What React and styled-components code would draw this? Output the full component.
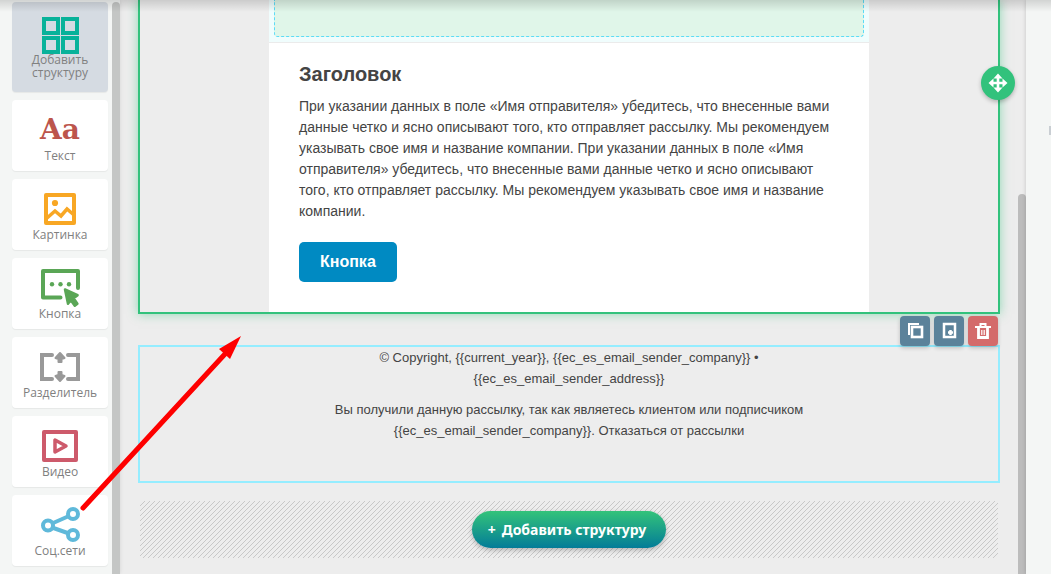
import styled, { createGlobalStyle } from 'styled-components';

const GlobalStyle = createGlobalStyle`
  * {
    box-sizing: border-box;
  }
  body {
    margin: 0;
    background: #ededed;
    font-family: 'Liberation Sans', Arial, sans-serif;
  }
  button {
    border: 0;
    padding: 0;
    cursor: pointer;
  }
  svg {
    display: block;
  }
`;

const StructureIcon = () => (
  <svg width="40" height="40" fill="none" stroke="#08b29a" strokeWidth="4">
    <rect x="4" y="5" width="14" height="14" />
    <rect x="23" y="5" width="14" height="14" />
    <rect x="4" y="24" width="14" height="14" />
    <rect x="23" y="24" width="14" height="14" />
  </svg>
);

const PictureIcon = () => (
  <svg width="40" height="40" fill="none" stroke="#f8a724" strokeWidth="4">
    <rect x="6" y="6" width="28" height="28" strokeLinejoin="round" />
    <path d="M7 29l8-7 6 5 6-7 7 6" strokeWidth="3.5" />
    <circle cx="15" cy="14" r="3.1" fill="#f8a724" stroke="none" />
  </svg>
);

const ButtonIcon = () => (
  <svg width="40" height="40" fill="none">
    <path
      d="M38 20V3H3v26.5h17.5"
      stroke="#5aa656"
      strokeWidth="4"
      strokeLinecap="round"
      strokeLinejoin="round"
    />
    <g fill="#5aa656">
      <circle cx="12" cy="16.3" r="2.2" />
      <circle cx="20.5" cy="16.3" r="2.2" />
      <circle cx="29" cy="16.3" r="2.2" />
      <path
        d="M25 21.5l12.6 5.700-4 3 3.800 5.500-2.600 2-4-5.500-2.800 3.500z"
        stroke="#5aa656"
        strokeWidth="2.5"
        strokeLinejoin="round"
      />
    </g>
  </svg>
);

const DividerIcon = () => (
  <svg width="40" height="40" fill="none">
    <path
      d="M12 8H2v24h10M28 8h10v24H28"
      stroke="#999"
      strokeWidth="4"
      strokeLinecap="round"
    />
    <path
      d="M20 6l4.500 5-3 1v3h-3v-3l-3-1zM20 34l4.500-5-3-1v-3h-3v3l-3 1z"
      fill="#999"
      stroke="#999"
      strokeWidth="2"
      strokeLinejoin="round"
    />
  </svg>
);

const VideoIcon = () => (
  <svg
    width="40"
    height="40"
    fill="none"
    stroke="#cd5a6b"
    strokeWidth="4"
    strokeLinejoin="round"
  >
    <rect x="4" y="6" width="32" height="28" />
    <path d="M15 14v12l11-6z" strokeWidth="3.5" />
  </svg>
);

const SocialIcon = () => (
  <svg width="40" height="40" fill="none" stroke="#5fb9da" strokeWidth="4">
    <path d="M12 18.5L29 11M12 22.5L29 28.500" />
    <circle cx="8" cy="20.5" r="5" />
    <circle cx="33" cy="9" r="5" />
    <circle cx="33" cy="30" r="5" />
  </svg>
);

const CopyIcon = () => (
  <svg width="30" height="30" fill="none" stroke="#fff">
    <path d="M9 19V8h10" strokeWidth="2" />
    <rect x="12" y="11" width="10" height="10" strokeWidth="2.6" />
  </svg>
);

const SaveIcon = () => (
  <svg width="30" height="30" fill="none" stroke="#fff">
    <rect x="10" y="8" width="11" height="13" strokeWidth="2.5" />
    <path d="M16.5 14v5M14 16.500h5" strokeWidth="2.5" />
  </svg>
);

const TrashIcon = () => (
  <svg width="30" height="30" fill="none" stroke="#fff">
    <path d="M7 11h16M12.500 10V8h5v2" strokeWidth="2" />
    <path d="M10.500 12v9.500h9V12" strokeWidth="2.8" />
    <path d="M13.800 14v5M16.200 14v5" strokeWidth="1.2" />
  </svg>
);

const MoveIcon = () => (
  <svg width="20" height="20" fill="none">
    <path d="M10 3v14M3 10h14" stroke="#fff" strokeWidth="2.6" />
    <path
      d="M10 .500l4.500 5h-9zM10 19.500l4.500-5h-9zM.500 10l5-4.500v9zM19.500 10l-5-4.500v9z"
      fill="#fff"
    />
  </svg>
);

const LetterIcon = () => <Letters aria-hidden="true">Aa</Letters>;

const blocks = [
  { title: 'Текст', Icon: LetterIcon },
  { title: 'Картинка', Icon: PictureIcon },
  { title: 'Кнопка', Icon: ButtonIcon },
  { title: 'Разделитель', Icon: DividerIcon },
  { title: 'Видео', Icon: VideoIcon },
  { title: 'Соц.сети', Icon: SocialIcon },
];

function Sidebar() {
  return (
    <SidebarWrapper>
      <BlockList>
        <BlockCard $active>
          <StructureIcon />
          <BlockTitle>Добавить структуру</BlockTitle>
        </BlockCard>
        {blocks.map(({ title, Icon }) => (
          <BlockCard key={title}>
            <Icon />
            <BlockTitle>{title}</BlockTitle>
          </BlockCard>
        ))}
      </BlockList>
      <SidebarThumb />
    </SidebarWrapper>
  );
}

function App() {
  return (
    <Page>
      <GlobalStyle />
      <Sidebar />
      <Canvas>
        <SelectedStructure>
          <MoveButton aria-label="Переместить">
            <MoveIcon />
          </MoveButton>
          <Letter>
            <DropArea>
              <DropTarget />
            </DropArea>
            <LetterBody>
              <Title>Заголовок</Title>
              <Text>
                При указании данных в поле «Имя отправителя» убедитесь, что
                внесенные вами данные четко и ясно описывают того, кто
                отправляет рассылку. Мы рекомендуем указывать свое имя и
                название компании. При указании данных в поле «Имя отправителя»
                убедитесь, что внесенные вами данные четко и ясно описывают
                того, кто отправляет рассылку. Мы рекомендуем указывать свое имя
                и название компании.
              </Text>
              <LetterButton>Кнопка</LetterButton>
            </LetterBody>
          </Letter>
        </SelectedStructure>

        <FooterStructure>
          <Tools>
            <ToolButton aria-label="Копировать">
              <CopyIcon />
            </ToolButton>
            <ToolButton aria-label="Сохранить">
              <SaveIcon />
            </ToolButton>
            <ToolButton $danger aria-label="Удалить">
              <TrashIcon />
            </ToolButton>
          </Tools>
          <FooterText>
            © Copyright, {'{{current_year}}'},{' '}
            {'{{ec_es_email_sender_company}}'} •{' '}
            {'{{ec_es_email_sender_address}}'}
          </FooterText>
          <FooterText>
            Вы получили данную рассылку, так как являетесь клиентом или
            подписчиком {'{{ec_es_email_sender_company}}'}.{' '}
            <FooterLink href="#unsubscribe">Отказаться от рассылки</FooterLink>
          </FooterText>
        </FooterStructure>

        <AddArea>
          <AddButton>
            <span>+</span>
            Добавить структуру
          </AddButton>
        </AddArea>
      </Canvas>
      <CanvasTrack>
        <CanvasThumb />
      </CanvasTrack>
      <RightPanel>
        <PanelHandle />
      </RightPanel>
      <HeaderShadow />
      <Pointer width="170" height="184">
        <path
          d="M7 176L149 22"
          stroke="#fe0000"
          strokeWidth="5"
          strokeLinecap="round"
        />
        <path d="M165 4L143 17l11 10z" fill="#fe0000" />
      </Pointer>
    </Page>
  );
}

export default App;

const Page = styled.div`
  position: relative;
  display: flex;
  height: 100vh;
  overflow: hidden;
  background: #ededed;
`;

const SidebarWrapper = styled.aside`
  display: flex;
  flex: none;
  gap: 4px;
  padding-left: 12px;
  background: #f4f6f5;
  box-shadow: 0 0 4px rgba(0, 0, 0, 0.1);
`;

const BlockList = styled.div`
  display: flex;
  flex-direction: column;
  gap: 8px;
  width: 96px;
  padding: 2px 0 8px;
`;

const BlockCard = styled.button`
  display: flex;
  flex: none;
  flex-direction: column;
  align-items: center;
  height: ${({ $active }) => ($active ? 90 : 71)}px;
  padding: ${({ $active }) => ($active ? '12px 12px 0' : '10px 0 0')};
  border-radius: 4px;
  background: ${({ $active }) => ($active ? '#d5dbe2' : '#fff')};
  box-shadow: 0 1px 1px rgba(0, 0, 0, 0.06);
`;

const BlockTitle = styled.span`
  margin-top: -1px;
  color: #808080;
  font-family: 'Open Sans', 'Noto Sans', sans-serif;
  font-size: 12px;
  line-height: 13px;
  text-align: center;
`;

const Letters = styled.span`
  height: 40px;
  color: #bc554c;
  font-family: 'DejaVu Serif', serif;
  font-size: 28px;
  font-weight: 700;
  line-height: 40px;
`;

const SidebarThumb = styled.div`
  width: 8px;
  margin-top: 2px;
  border-radius: 4px 4px 0 0;
  background: #c4c6c5;
`;

const Canvas = styled.main`
  flex: 1;
  min-width: 0;
  padding: 0 18px;
`;

const SelectedStructure = styled.section`
  position: relative;
  border: 2px solid #32c27c;
  border-top: 0;
  box-shadow: 0 0 10px rgba(50, 194, 124, 0.5);
`;

const MoveButton = styled.button`
  position: absolute;
  top: 66px;
  right: -17px;
  display: flex;
  align-items: center;
  justify-content: center;
  width: 34px;
  height: 34px;
  border-radius: 50%;
  background: #32c27c;
  box-shadow: 0 2px 4px rgba(0, 0, 0, 0.25);
`;

const Letter = styled.div`
  max-width: 600px;
  margin: 0 auto;
  background: #fff;
`;

const DropArea = styled.div`
  padding: 0 5px 5px;
  border-bottom: 1px solid #ebebeb;
  background: #f0fdfd;
`;

const DropTarget = styled.div`
  height: 37px;
  border: 1px dashed #5bdcf7;
  border-top: 0;
  border-radius: 0 0 4px 4px;
  background: #e0f6e9;
`;

const LetterBody = styled.div`
  padding: 19px 30px 30px;
`;

const Title = styled.h2`
  margin: 0 0 10px;
  color: #444;
  font-size: 20px;
  line-height: 24px;
`;

const Text = styled.p`
  margin: 0 0 20px;
  color: #444;
  font-size: 14px;
  line-height: 21px;
`;

const LetterButton = styled.button`
  display: block;
  height: 40px;
  padding: 0 21px;
  border-radius: 5px;
  background: #008ac2;
  color: #fff;
  font-family: 'Liberation Sans', Arial, sans-serif;
  font-size: 16px;
  font-weight: 700;
`;

const FooterStructure = styled.section`
  position: relative;
  margin-top: 31px;
  padding-bottom: 40px;
  border: 2px solid #95edff;
`;

const FooterText = styled.p`
  max-width: 500px;
  margin: 0 auto;
  color: #444;
  font-size: 13px;
  line-height: 21px;
  text-align: center;

  & + & {
    margin-top: 10px;
  }
`;

const FooterLink = styled.a`
  color: inherit;
  text-decoration: none;
`;

const Tools = styled.div`
  position: absolute;
  right: 0;
  bottom: 100%;
  display: flex;
  gap: 4px;
  padding-bottom: 1px;
`;

const ToolButton = styled.button`
  width: 30px;
  height: 30px;
  border-radius: 4px;
  background: ${({ $danger }) => ($danger ? '#d46b6b' : '#5b829a')};
  box-shadow: 0 2px 4px rgba(0, 0, 0, 0.2);
`;

const AddArea = styled.div`
  display: flex;
  align-items: center;
  justify-content: center;
  height: 57px;
  margin: 18px 2px 0;
  background-image: linear-gradient(
    -45deg,
    transparent 44%,
    #c8c8c8 44%,
    #c8c8c8 56%,
    transparent 56%
  );
  background-size: 5px 5px;
`;

const AddButton = styled.button`
  display: flex;
  align-items: center;
  gap: 6px;
  height: 37px;
  padding: 0 20px 0 16px;
  border-radius: 19px;
  background: linear-gradient(#33c37a, #037c98);
  box-shadow: 0 2px 5px rgba(0, 0, 0, 0.25);
  color: #fff;
  font-family: 'Noto Sans', sans-serif;
  font-size: 14px;
  font-weight: 700;
`;

const CanvasTrack = styled.div`
  display: flex;
  flex: none;
  width: 8px;
  padding-top: 194px;
`;

const CanvasThumb = styled.div`
  flex: 1;
  border-radius: 4px 4px 0 0;
  background: #bcbcbc;
`;

const RightPanel = styled.aside`
  display: flex;
  flex: none;
  justify-content: flex-end;
  width: 25px;
  padding-top: 126px;
  background: #f4f6f5;
  box-shadow: 0 0 4px rgba(0, 0, 0, 0.18);
`;

const PanelHandle = styled.div`
  width: 2px;
  height: 9px;
  background: #c9ced3;
`;

const HeaderShadow = styled.div`
  position: absolute;
  top: 0;
  left: 0;
  right: 0;
  height: 12px;
  background: linear-gradient(rgba(0, 0, 0, 0.14), rgba(0, 0, 0, 0));
  pointer-events: none;
`;

/* annotation arrow lying over the sidebar and the canvas */
const Pointer = styled.svg`
  position: absolute;
  top: 332px;
  left: 76px;
  pointer-events: none;
`;
